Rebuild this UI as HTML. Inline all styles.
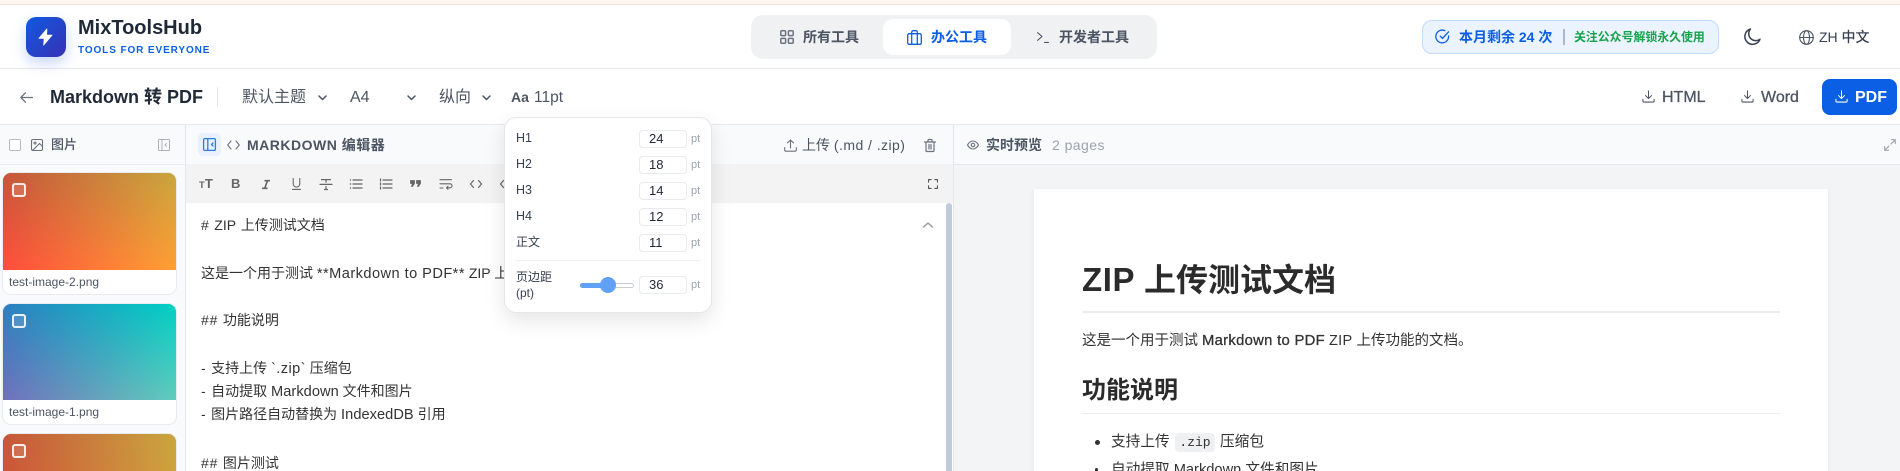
<!DOCTYPE html>
<html lang="zh"><head><meta charset="utf-8"><title>Markdown 转 PDF</title>
<style>
*{box-sizing:border-box}
html,body{margin:0;padding:0;width:1900px;height:471px;overflow:hidden;background:#fff}
body{font-family:"Liberation Sans","Noto Sans CJK SC",sans-serif;color:#1f2937;position:relative}
#root{position:absolute;left:0;top:0;width:1900px;height:471px;overflow:hidden}
.a{position:absolute;white-space:nowrap}
svg{position:absolute;fill:none;stroke:currentColor;stroke-width:2;stroke-linecap:round;stroke-linejoin:round;overflow:visible}
.t{line-height:20px;height:20px}
.card{position:absolute;left:3px;width:173px;height:121px;border-radius:8px;background:#fff;box-shadow:0 0 0 1px #e8eaee;overflow:hidden}
.img{position:absolute;left:0;top:0;width:173px;height:97px}
.img i{position:absolute;left:0;top:0;width:173px;height:100%;display:block;-webkit-mask-image:linear-gradient(to bottom,#000,transparent);mask-image:linear-gradient(to bottom,#000,transparent);-webkit-mask-size:100% 97px;mask-size:100% 97px;-webkit-mask-repeat:no-repeat;mask-repeat:no-repeat}
.cb{position:absolute;left:9px;top:10px;width:14px;height:14px;border:2px solid rgba(255,255,255,.88);border-radius:3px;background:rgba(255,255,255,.12)}
.cap{position:absolute;left:6px;font-size:12px;line-height:24px;height:24px;color:#4b5563}
.md{font-size:14px;color:#333;left:201px;line-height:24px;height:24px}
.l{font-size:14.6px;letter-spacing:.05px}
.s{letter-spacing:.8px}
.lbl{left:516px;font-size:12.5px;color:#374151;line-height:18px;height:18px}
.inp{position:absolute;left:639px;width:48px;height:18px;border:1px solid #e8eaee;border-radius:4px;background:#fff;font-size:13px;line-height:16px;color:#1f2937;padding-left:9px}
.pt{left:691px;font-size:11px;color:#9ca3af;line-height:18px;height:18px}
.semi{-webkit-text-stroke:.3px currentColor}
</style></head><body><div id="root">

<!-- top strip -->
<div class="a" style="left:0;top:0;width:1900px;height:5px;background:#fff5f1;border-bottom:1px solid #fbdfd4"></div>

<!-- header -->
<div class="a" style="left:0;top:68px;width:1900px;height:1px;background:#e5e7eb"></div>
<div class="a" style="left:26px;top:17px;width:40px;height:40px;border-radius:10px;background:linear-gradient(135deg,#0f5be0,#3730b5);box-shadow:0 6px 14px rgba(37,99,235,.25)"></div>
<svg style="left:38px;top:28px;color:#fff;fill:#fff;stroke-width:.8" width="15" height="18" viewBox="0 0 16 19"><path d="M9.500.8 1 11h5.500L6 18.200 15 7.500H9.200z"/></svg>
<div class="a" style="left:78px;top:17px;font-size:20px;line-height:23px;font-weight:700;color:#1f2937">MixToolsHub</div>
<div class="a" style="left:78px;top:45px;font-size:10px;line-height:12px;font-weight:700;letter-spacing:.9px;color:#0b5fe8">TOOLS FOR EVERYONE</div>

<!-- nav -->
<div class="a" style="left:751px;top:15px;width:406px;height:44px;border-radius:12px;background:#f0f1f3"></div>
<div class="a" style="left:883px;top:19px;width:128px;height:36px;border-radius:10px;background:#fff"></div>
<svg style="left:780px;top:30px;color:#6b7280;stroke-width:1.5" width="14" height="14" viewBox="0 0 14 14"><rect x="0.8" y="0.8" width="4.8" height="4.8" rx="1"/><rect x="8.4" y="0.8" width="4.8" height="4.8" rx="1"/><rect x="0.8" y="8.4" width="4.8" height="4.8" rx="1"/><rect x="8.4" y="8.4" width="4.8" height="4.8" rx="1"/></svg>
<div class="a t" style="left:803px;top:27px;font-size:14px;font-weight:700;color:#4b5563">所有工具</div>
<svg style="left:907px;top:30px;color:#0b5fe5;stroke-width:1.3" width="15" height="15" viewBox="0 0 15 15"><rect x=".7" y="3.700" width="13.600" height="10.600" rx="1.500"/><path d="M4.700 14.300V2.200A1.500 1.500 0 0 1 6.200.7h2.600a1.500 1.500 0 0 1 1.500 1.500v12.100"/></svg>
<div class="a t" style="left:931px;top:27px;font-size:14px;font-weight:700;color:#0b5fe5">办公工具</div>
<svg style="left:1037px;top:32px;color:#4b5563;stroke-width:1.1" width="12" height="11" viewBox="0 0 12 11"><path d="M.6.6 5 4.500.6 8.400M7.500 10.400h4"/></svg>
<div class="a t" style="left:1059px;top:27px;font-size:14px;font-weight:700;color:#4b5563">开发者工具</div>

<!-- badge -->
<div class="a" style="left:1422px;top:20px;width:297px;height:34px;border-radius:10px;background:#ebf3fe;border:1px solid #bfdbfe"></div>
<svg style="left:1435px;top:29px;color:#0b5fe5;stroke-width:1.4" width="15" height="15" viewBox="0 0 16 16"><path d="M14.500 7.500V8A6.800 6.800 0 1 1 10.500 1.800"/><path d="M5.500 7.500 8 10l6.500-7"/></svg>
<div class="a t" style="left:1459px;top:27px;font-size:14px;font-weight:700;color:#0b5fe5">本月剩余 24 次</div>
<div class="a" style="left:1563px;top:29px;width:1.500px;height:16px;background:#a9b8cc"></div>
<div class="a t" style="left:1574px;top:27px;font-size:11.900px;font-weight:700;color:#16a34a">关注公众号解锁永久使用</div>
<svg style="left:1744px;top:28px;color:#374151;stroke-width:1.500" width="17" height="17" viewBox="0 0 17 17"><path d="M6.500 1A7.800 7.800 0 1 0 16 11.200 7 7 0 0 1 6.500 1z"/></svg>
<svg style="left:1799px;top:30px;color:#4b5563;stroke-width:1.100" width="15" height="15" viewBox="0 0 15 15"><circle cx="7.500" cy="7.500" r="6.800"/><ellipse cx="7.500" cy="7.500" rx="3" ry="6.800"/><path d="M.7 7.500h13.600"/></svg>
<div class="a t" style="left:1819px;top:27px;font-size:14px;font-weight:500;color:#374151">ZH 中文</div>

<!-- toolbar -->
<div class="a" style="left:0;top:124px;width:1900px;height:1px;background:#e5e7eb"></div>
<svg style="left:20px;top:92px;color:#6b7280;stroke-width:1.300" width="13" height="11" viewBox="0 0 13 11"><path d="M12.400 5.500H.8M5.500.8.800 5.500l4.700 4.700"/></svg>
<div class="a" style="left:50px;top:85px;font-size:18px;line-height:24px;font-weight:700;color:#1f2937">Markdown 转 PDF</div>
<div class="a" style="left:217px;top:87px;width:1px;height:20px;background:#e5e7eb"></div>
<div class="a" style="left:242px;top:86px;font-size:16px;line-height:24px;color:#4b5563">默认主题</div>
<svg style="left:318px;top:95px;color:#4b5563;stroke-width:1.500" width="9" height="6" viewBox="0 0 9 6"><path d="M1 1l3.500 3.500L8 1"/></svg>
<div class="a" style="left:350px;top:86px;font-size:16px;line-height:24px;color:#4b5563">A4</div>
<svg style="left:407px;top:95px;color:#4b5563;stroke-width:1.500" width="9" height="6" viewBox="0 0 9 6"><path d="M1 1l3.500 3.500L8 1"/></svg>
<div class="a" style="left:439px;top:86px;font-size:16px;line-height:24px;color:#4b5563">纵向</div>
<svg style="left:482px;top:95px;color:#4b5563;stroke-width:1.500" width="9" height="6" viewBox="0 0 9 6"><path d="M1 1l3.500 3.500L8 1"/></svg>
<div class="a" style="left:511px;top:87px;font-size:14px;line-height:20px;font-weight:700;color:#4b5563">Aa</div>
<div class="a" style="left:534px;top:86px;font-size:15.500px;line-height:24px;color:#4b5563">11pt</div>

<svg style="left:1642px;top:90px;color:#4b5563;stroke-width:1.100" width="13" height="13" viewBox="0 0 14 14"><path d="M7 1v8M3.800 6 7 9.200 10.200 6M1 10v2a1 1 0 0 0 1 1h10a1 1 0 0 0 1-1v-2"/></svg>
<div class="a semi" style="left:1662px;top:86px;font-size:16px;line-height:24px;font-weight:500;color:#4b5563">HTML</div>
<svg style="left:1741px;top:90px;color:#4b5563;stroke-width:1.100" width="13" height="13" viewBox="0 0 14 14"><path d="M7 1v8M3.800 6 7 9.200 10.200 6M1 10v2a1 1 0 0 0 1 1h10a1 1 0 0 0 1-1v-2"/></svg>
<div class="a semi" style="left:1761px;top:86px;font-size:16px;line-height:24px;font-weight:500;color:#4b5563">Word</div>
<div class="a" style="left:1822px;top:79px;width:75px;height:36px;border-radius:8px;background:#0b5fe5"></div>
<svg style="left:1835px;top:90px;color:#fff;stroke-width:1.100" width="13" height="13" viewBox="0 0 14 14"><path d="M7 1v8M3.800 6 7 9.200 10.200 6M1 10v2a1 1 0 0 0 1 1h10a1 1 0 0 0 1-1v-2"/></svg>
<div class="a" style="left:1855px;top:86px;font-size:16px;line-height:24px;font-weight:700;color:#fff">PDF</div>

<!-- panel headers -->
<div class="a" style="left:0;top:125px;width:1900px;height:39px;background:#f9fafb"></div>
<div class="a" style="left:185px;top:125px;width:1px;height:346px;background:#e5e7eb"></div>
<div class="a" style="left:953px;top:125px;width:1px;height:346px;background:#e5e7eb"></div>
<div class="a" style="left:0;top:164px;width:185px;height:1px;background:#eceef1"></div>

<!-- left panel -->
<div class="a" style="left:0;top:165px;width:185px;height:306px;background:#f9fafb"></div>
<div class="a" style="left:9px;top:139px;width:12px;height:12px;border:1.500px solid #b6bcc6;border-radius:2px;background:#fff"></div>
<svg style="left:31px;top:139px;color:#6b7280;stroke-width:1.100" width="12" height="12" viewBox="0 0 12 12"><rect x=".5" y=".5" width="11" height="11" rx="1.500"/><circle cx="4" cy="4" r="1"/><path d="M11.500 7.500 8.500 4.500 1.500 11.500"/></svg>
<div class="a t" style="left:51px;top:135px;font-size:13px;font-weight:500;color:#4b5563">图片</div>
<svg style="left:158px;top:139px;color:#aab0ba;stroke-width:1" width="12" height="12" viewBox="0 0 12 12"><rect x=".5" y=".5" width="11" height="11" rx="1"/><path d="M4 .5v11M8.500 4.500 7 6l1.500 1.500"/></svg>

<div class="card" style="top:173px"><div class="img" style="background:linear-gradient(to right,#ff4d3d,#ffa033)"><i style="background:linear-gradient(to right,#c6563a,#c9a63e)"></i><div class="cb"></div></div><div class="cap" style="top:97px">test-image-2.png</div></div>
<div class="card" style="top:304px;height:120px"><div class="img" style="height:96px;background:linear-gradient(to right,#7270bd,#62cdbc)"><i style="background:linear-gradient(to right,#2d7fc0,#00d0c4)"></i><div class="cb"></div></div><div class="cap" style="top:96px">test-image-1.png</div></div>
<div class="card" style="top:434px;height:37px;border-radius:8px 8px 0 0"><div class="img" style="height:37px;background:linear-gradient(to right,#f0503d,#ec8f38)"><i style="background:linear-gradient(to right,#c6563a,#c9a63e);-webkit-mask-image:none;mask-image:linear-gradient(#000,rgba(0,0,0,.62))"></i><div class="cb"></div></div></div>

<!-- editor header -->
<div class="a" style="left:198px;top:133px;width:23px;height:23px;border-radius:5px;background:#e8f1fd"></div>
<svg style="left:203px;top:138px;color:#2b7ce9;stroke-width:1.300" width="13" height="13" viewBox="0 0 13 13"><rect x=".6" y=".6" width="11.800" height="11.800" rx="1.200"/><path d="M4.800.6v11.800M10 5 8.500 6.500 10 8"/></svg>
<svg style="left:227px;top:140px;color:#6b7280;stroke-width:1.100" width="13" height="10" viewBox="0 0 13 10"><path d="M4 1 .7 5 4 9M9 1l3.300 4L9 9"/></svg>
<div class="a t" style="left:247px;top:135px;font-size:14px;font-weight:700;letter-spacing:.5px;color:#4b5563">MARKDOWN 编辑器</div>
<svg style="left:784px;top:139px;color:#6b7280;stroke-width:1.100" width="13" height="13" viewBox="0 0 13 13"><path d="M6.500 9V1M3.500 3.800 6.500 1l3 2.800M.7 8.500v2.500a1.200 1.200 0 0 0 1.200 1.200h9.200a1.200 1.200 0 0 0 1.200-1.200V8.500"/></svg>
<div class="a t" style="left:802px;top:135px;font-size:14px;color:#4b5563">上传 <span style="letter-spacing:.45px">(.md / .zip)</span></div>
<svg style="left:924px;top:139px;color:#6b7280;stroke-width:1.200" width="12" height="13" viewBox="0 0 12 13"><path d="M.5 3h11M4 3V1.500A1 1 0 0 1 5 .5h2a1 1 0 0 1 1 1V3M2 3v8.500a1 1 0 0 0 1 1h6a1 1 0 0 0 1-1V3M5 5.500v4.500M7 5.500v4.500"/></svg>

<!-- editor toolbar -->
<div class="a" style="left:186px;top:164px;width:767px;height:39px;background:#f3f3f3"></div>
<div class="a" style="left:199px;top:175px;font-size:13px;line-height:18px;height:18px;font-weight:700;color:#666"><span style="font-size:9.500px">T</span>T</div>
<div class="a" style="left:231px;top:175px;font-size:13px;line-height:18px;height:18px;font-weight:700;color:#666">B</div>
<svg style="left:262px;top:180px;color:#666;stroke-width:1.600;stroke-linecap:butt" width="8" height="9" viewBox="0 0 8 9"><path d="M2.500.7H8M0 8.300h5.500M5.500.7 2.700 8.300"/></svg>
<svg style="left:292px;top:178px;color:#666;stroke-width:1.100" width="9" height="12" viewBox="0 0 9 12"><path d="M1.200.6v5.200a3.300 3.300 0 0 0 6.600 0V.6M.5 11.400h8"/></svg>
<svg style="left:320px;top:179px;color:#666;stroke-width:1.200" width="12" height="11" viewBox="0 0 12 11"><path d="M1.500 .6h9M6 .6v2.600M0 5.400h12M6 7.500v3M4.500 10.500h3"/></svg>
<svg style="left:350px;top:179px;color:#666;stroke-width:1.200" width="12" height="10" viewBox="0 0 12 10"><path d="M3 1h9M3 5h9M3 9h9M.3 1h.4M.3 5h.4M.3 9h.4"/></svg>
<svg style="left:380px;top:179px;color:#666;stroke-width:1.200" width="12" height="10" viewBox="0 0 12 10"><path d="M3 1h9M3 5h9M3 9h9M.5 0v2M.5 4v2M.5 8v2"/></svg>
<svg style="left:410px;top:180px;color:#666;fill:#666;stroke-width:.8" width="11" height="7" viewBox="0 0 11 7"><path d="M.5.5h4v3l-2 3h-1l1-3h-2zM6.500.5h4v3l-2 3h-1l1-3h-2z"/></svg>
<svg style="left:440px;top:179px;color:#666;stroke-width:1.100" width="12" height="10" viewBox="0 0 12 10"><path d="M0 .7h11.500M0 4.800h10a2 2 0 0 1 0 4H6.500M8 7.200 6.500 8.800 8 10.200M0 9h3"/></svg>
<svg style="left:470px;top:180px;color:#666;stroke-width:1.200" width="12" height="8" viewBox="0 0 12 8"><path d="M3.500.5.500 4l3 3.500M8.500.5l3 3.500-3 3.500"/></svg>
<svg style="left:500px;top:180px;color:#666;stroke-width:1.200" width="4" height="8" viewBox="0 0 4 8"><path d="M3.500.5.500 4l3 3.500"/></svg>
<svg style="left:928px;top:179px;color:#555;stroke-width:1.200" width="10" height="10" viewBox="0 0 11 11"><path d="M.6 3.500V.6h2.900M7.500.6h2.900v2.900M10.400 7.500v2.900H7.500M3.500 10.400H.6V7.500"/></svg>

<!-- editor text -->
<div class="a md" style="top:213px"><span class="s"># </span>ZIP<span class="s"> </span>上传测试文档</div>
<div class="a md" style="top:261px">这是一个用于测试 <span class="l" style="letter-spacing:.45px">**Markdown to PDF**</span> ZIP 上传功能的文档。</div>
<div class="a md" style="top:308px"><span class="s">## </span>功能说明</div>
<div class="a md" style="top:356px"><span class="s">- </span>支持上传 <span class="l" style="letter-spacing:.4px">`.zip`</span> 压缩包</div>
<div class="a md" style="top:379px"><span class="s">- </span>自动提取 <span class="l">Markdown</span> 文件和图片</div>
<div class="a md" style="top:402px"><span class="s">- </span>图片路径自动替换为 <span class="l">IndexedDB</span> 引用</div>
<div class="a md" style="top:451px;height:20px;overflow:hidden"><span class="s">## </span>图片测试</div>
<svg style="left:923px;top:222px;color:#9a9a9a;stroke-width:1.500" width="10" height="6" viewBox="0 0 10 6"><path d="M.7 5 5 1l4.300 4"/></svg>
<div class="a" style="left:946px;top:203px;width:6px;height:268px;border-radius:3px 3px 0 0;background:#c0cbdc"></div>

<!-- preview -->
<svg style="left:967px;top:139px;color:#6b7280;stroke-width:1.100" width="12" height="12" viewBox="0 0 12 12"><path d="M.5 6S2.500 2 6 2s5.500 4 5.500 4-2 4-5.500 4S.5 6 .5 6z"/><circle cx="6" cy="6" r="1.700"/></svg>
<div class="a t" style="left:986px;top:135px;font-size:14px;font-weight:700;color:#4b5563">实时预览</div>
<div class="a t" style="left:1052px;top:135px;font-size:14px;letter-spacing:.45px;color:#9ca3af">2 pages</div>
<svg style="left:1884px;top:139px;color:#9ca3af;stroke-width:1.100" width="12" height="12" viewBox="0 0 12 12"><path d="M7.500.7h3.800v3.800M11.300.7 7 5M4.500 11.300H.7V7.500M.7 11.300 5 7"/></svg>
<div class="a" style="left:954px;top:164px;width:946px;height:1px;background:#e5e7eb"></div>
<div class="a" style="left:954px;top:165px;width:946px;height:306px;background:#f3f4f6"></div>
<div class="a" style="left:1034px;top:189px;width:794px;height:282px;background:#fff;box-shadow:0 1px 4px rgba(0,0,0,.08)"></div>
<div class="a" style="left:1082px;top:258px;font-size:32px;line-height:44px;height:44px;font-weight:700;color:#2b2b2b"><span style="font-size:33px;letter-spacing:.6px">ZIP</span> 上传测试文档</div>
<div class="a" style="left:1082px;top:311px;width:698px;height:2px;background:#eaecef"></div>
<div class="a" style="left:1082px;top:329px;font-size:14.500px;line-height:24px;height:24px;color:#333">这是一个用于测试 <span class="semi" style="letter-spacing:.3px;font-size:14.800px">Markdown to PDF</span> <span style="letter-spacing:.3px">ZIP</span> 上传功能的文档。</div>
<div class="a" style="left:1082px;top:373px;font-size:24px;line-height:36px;height:36px;font-weight:700;color:#2b2b2b">功能说明</div>
<div class="a" style="left:1082px;top:413px;width:698px;height:1px;background:#eaecef"></div>
<div class="a" style="left:1095px;top:440px;width:5px;height:5px;border-radius:50%;background:#333"></div>
<div class="a" style="left:1111px;top:430px;font-size:14.670px;line-height:24px;height:24px;color:#333">支持上传</div>
<div class="a" style="left:1175px;top:433px;width:40px;height:19px;border-radius:4px;background:#eff0f2;font-family:'Liberation Mono',monospace;font-size:13px;line-height:19px;text-align:center;color:#333">.zip</div>
<div class="a" style="left:1220px;top:430px;font-size:14.670px;line-height:24px;height:24px;color:#333">压缩包</div>
<div class="a" style="left:1095px;top:468px;width:3px;height:3px;border-radius:50% 50% 0 0;background:#333"></div>
<div class="a" style="left:1111px;top:458px;height:13px;overflow:hidden;font-size:14.670px;line-height:24px;color:#333">自动提取 Markdown 文件和图片</div>

<!-- popover -->
<div class="a" style="left:504px;top:117px;width:208px;height:196px;border-radius:12px;background:#fff;border:1px solid #e5e7eb;box-shadow:0 8px 20px rgba(0,0,0,.1)"></div>
<div class="a lbl" style="top:129px">H1</div><div class="inp" style="top:130px">24</div><div class="a pt" style="top:130px">pt</div>
<div class="a lbl" style="top:155px">H2</div><div class="inp" style="top:156px">18</div><div class="a pt" style="top:156px">pt</div>
<div class="a lbl" style="top:181px">H3</div><div class="inp" style="top:182px">14</div><div class="a pt" style="top:182px">pt</div>
<div class="a lbl" style="top:207px">H4</div><div class="inp" style="top:208px">12</div><div class="a pt" style="top:208px">pt</div>
<div class="a lbl" style="top:233px;font-size:12px">正文</div><div class="inp" style="top:234px">11</div><div class="a pt" style="top:234px">pt</div>
<div class="a" style="left:516px;top:260px;width:184px;height:1px;background:#eef0f2"></div>
<div class="a lbl" style="top:269px;height:32px;line-height:16px;font-size:12px">页边距<br>(pt)</div>
<div class="a" style="left:580px;top:283px;width:54px;height:5px;border-radius:3px;background:#fff;border:1px solid #c9ccd1"></div>
<div class="a" style="left:580px;top:283px;width:28px;height:5px;border-radius:3px;background:#60a0f5"></div>
<div class="a" style="left:600px;top:277px;width:16px;height:16px;border-radius:50%;background:#60a0f5"></div>
<div class="inp" style="top:276px">36</div><div class="a pt" style="top:276px">pt</div>
</div></body></html>
